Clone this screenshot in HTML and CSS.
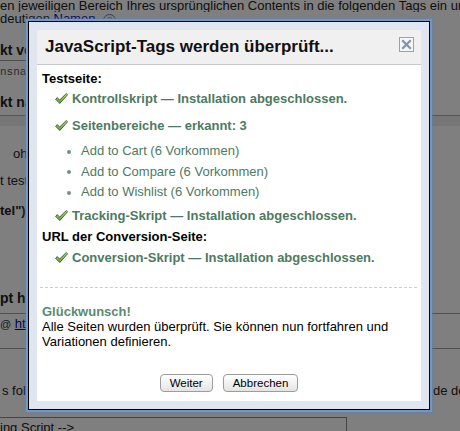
FILE: index.html
```html
<!DOCTYPE html>
<html lang="de">
<head>
<meta charset="utf-8">
<title>JavaScript-Tags</title>
<link rel="stylesheet" href="styles.css">
</head>
<body>
<div class="page">
  <div class="pg-line l1">en jeweiligen Bereich Ihres ursprünglichen Contents in die folgenden Tags ein und vergeben Sie einen</div>
  <div class="pg-line l2">deutigen <span class="pg-link">Namen</span> <span class="pg-help">?</span></div>
  <div class="pg-head h1">kt vor dem Klick</div>
  <div class="pg-field">nsnandrew@example.com</div>
  <div class="pg-head h2">kt nach dem Klick</div>
  <div class="pg-band"></div>
  <div class="pg-line r3">ohne Parameter</div>
  <div class="pg-line r4">t testen</div>
  <div class="pg-line r5">tel")</div>
  <div class="pg-head h3">pt hinzufügen</div>
  <div class="pg-rule r6"></div>
  <div class="pg-line r7"><span class="pg-at">@</span> <span class="pg-link">http://www.example.com/</span></div>
  <div class="pg-rule r8"></div>
  <div class="pg-line r9"><span class="pg-left">s folgenden Code ein</span><span class="pg-right">de der Seite</span></div>
  <div class="pg-code">ing Script --&gt;</div>
</div>

<div class="overlay"></div>

<div class="dialog">
  <div class="dlg-inner">
    <div class="dlg-header">
      <div class="dlg-title">JavaScript-Tags werden überprüft...</div>
      <div class="dlg-close">
        <svg width="15" height="15" viewBox="0 0 15 15">
          <rect x="0.5" y="0.5" width="14" height="14" fill="#f6f6f6" stroke="#8fa3ba"/>
          <path d="M4 4 L11 11 M11 4 L4 11" stroke="#7d94ae" stroke-width="2.2" stroke-linecap="square"/>
        </svg>
      </div>
    </div>
    <div class="dlg-body">
      <div class="sec">Testseite:</div>
      <div class="check">
        <svg class="tick" width="13" height="11" viewBox="0 0 13 11"><defs><linearGradient id="g1" x1="0" y1="0" x2="0" y2="1"><stop offset="0" stop-color="#c4e88a"/><stop offset="1" stop-color="#62a035"/></linearGradient></defs><path d="M0.6 6.2 L2.3 4.6 L4.6 7.1 L11.3 0.5 L12.6 1.7 L4.8 10.5 Z" fill="url(#g1)" stroke="#2f5222" stroke-width="0.9" stroke-linejoin="round"/></svg>
        <span>Kontrollskript — Installation abgeschlossen.</span>
      </div>
      <div class="check c2">
        <svg class="tick" width="13" height="11" viewBox="0 0 13 11"><path d="M0.6 6.2 L2.3 4.6 L4.6 7.1 L11.3 0.5 L12.6 1.7 L4.8 10.5 Z" fill="url(#g1)" stroke="#2f5222" stroke-width="0.9" stroke-linejoin="round"/></svg>
        <span>Seitenbereiche — erkannt: 3</span>
      </div>
      <ul class="sub">
        <li>Add to Cart (6 Vorkommen)</li>
        <li>Add to Compare (6 Vorkommen)</li>
        <li>Add to Wishlist (6 Vorkommen)</li>
      </ul>
      <div class="check c3">
        <svg class="tick" width="13" height="11" viewBox="0 0 13 11"><path d="M0.6 6.2 L2.3 4.6 L4.6 7.1 L11.3 0.5 L12.6 1.7 L4.8 10.5 Z" fill="url(#g1)" stroke="#2f5222" stroke-width="0.9" stroke-linejoin="round"/></svg>
        <span>Tracking-Skript — Installation abgeschlossen.</span>
      </div>
      <div class="sec s2">URL der Conversion-Seite:</div>
      <div class="check c4">
        <svg class="tick" width="13" height="11" viewBox="0 0 13 11"><path d="M0.6 6.2 L2.3 4.6 L4.6 7.1 L11.3 0.5 L12.6 1.7 L4.8 10.5 Z" fill="url(#g1)" stroke="#2f5222" stroke-width="0.9" stroke-linejoin="round"/></svg>
        <span>Conversion-Skript — Installation abgeschlossen.</span>
      </div>
      <div class="divider"></div>
      <div class="congrats">Glückwunsch!</div>
      <div class="msg">Alle Seiten wurden überprüft. Sie können nun fortfahren und Variationen definieren.</div>
    </div>
    <div class="dlg-footer">
      <button class="btn">Weiter</button>
      <button class="btn">Abbrechen</button>
    </div>
  </div>
</div>
</body>
</html>
```

FILE: styles.css
```css
html, body {
  margin: 0;
  padding: 0;
  background: #ffffff;
  font-family: "Liberation Sans", Arial, sans-serif;
  font-size: 13px;
  color: #222;
  overflow: hidden;
  height: 431px;
}

.page {
  width: 460px;
  overflow: hidden;
}

.pg-line {
  white-space: nowrap;
  line-height: 20px;
  height: 20px;
  overflow: hidden;
}

.l1 { line-height: 12px; height: 12px; }
.l2 { line-height: 13px; height: 13px; }

.pg-link {
  color: #0000cc;
  text-decoration: underline;
}

.pg-help {
  display: inline-block;
  width: 11px;
  height: 11px;
  border: 1px solid #6b7fa8;
  border-radius: 50%;
  font-size: 9px;
  line-height: 11px;
  text-align: center;
  color: #6b7fa8;
  margin-left: 4px;
}

.pg-head {
  font-weight: bold;
  font-size: 14px;
  line-height: 20px;
  height: 20px;
  white-space: nowrap;
}

.h1 { margin-top: 15px; }
.h2 { margin-top: 12px; }
.h3 { margin-top: 67px; }

.pg-field {
  height: 19px;
  border-top: 1px solid #9a9a9a;
  font-family: "Liberation Mono", monospace;
  font-size: 11px;
  line-height: 22px;
  color: #5a5a5a;
  width: 200px;
  white-space: nowrap;
  overflow: hidden;
}

.pg-band {
  margin-top: 3px;
  height: 10px;
  border-top: 1px solid #aaaaaa;
  background: #ececec;
}

.r3 { margin-top: 18px; padding-left: 13px; }
.r4 { margin-top: 7px; }
.r5 { margin-top: 10px; font-weight: bold; }

.pg-rule {
  height: 0;
  border-top: 1px solid #a0a0a0;
}
.r6 { margin-top: 5px; }
.r8 { margin-top: 14px; }

.pg-at {
  font-size: 11px;
  color: #334;
}

.r9 {
  margin-top: 32px;
  display: flex;
}
.pg-left {
  width: 431px;
  flex: none;
  padding-left: 2px;
}
.pg-right {
  flex: none;
}

.pg-code {
  margin-top: 16px;
  width: 346px;
  height: 30px;
  border: 1px solid #8a8a8a;
  border-left: none;
  line-height: 20px;
  white-space: nowrap;
}

.overlay {
  position: fixed;
  top: 0;
  left: 0;
  right: 0;
  bottom: 0;
  background: rgba(0, 0, 0, 0.5);
}

.dialog {
  position: absolute;
  left: 28px;
  top: 21px;
  width: 384px;
  height: 371px;
  padding: 8px;
  background: #dfe6f0;
  border: 1px solid #000;
  box-shadow: 0 0 0 2px #6f98c6, 0 0 3px 3px rgba(90, 135, 190, 0.55);
}

.dlg-inner {
  height: 100%;
  background: #ffffff;
  display: flex;
  flex-direction: column;
}

.dlg-header {
  height: 34px;
  background: #f0f0f0;
  border-bottom: 1px solid #c9c9c9;
  display: flex;
  justify-content: space-between;
  align-items: flex-start;
  flex: none;
}

.dlg-title {
  font-size: 17px;
  font-weight: bold;
  line-height: 34px;
  padding-left: 8px;
  color: #111;
  white-space: nowrap;
}

.dlg-close {
  width: 15px;
  height: 15px;
  margin: 7px 7px 0 0;
}
.dlg-close svg { display: block; }

.dlg-body {
  padding: 4px 4px 0 5px;
  font-size: 13px;
  color: #000;
}

.sec {
  font-weight: bold;
  line-height: 20px;
  color: #000;
}
.s2 { margin-top: 1px; }

.check {
  display: flex;
  align-items: center;
  gap: 4px;
  padding-left: 13px;
  line-height: 20px;
  font-weight: bold;
  color: #4d7a62;
  white-space: nowrap;
}
.check .tick { flex: none; margin-top: -2px; }
.c2 { margin-top: 7px; }
.c3 { margin-top: 3.5px; }
.c4 { margin-top: 1px; }

.sub {
  list-style: none;
  margin: 5px 0 0;
  padding: 0;
}
.sub li {
  position: relative;
  padding-left: 39px;
  line-height: 20.5px;
  color: #4d7a62;
}
.sub li::before {
  content: "";
  position: absolute;
  left: 25px;
  top: 8.5px;
  width: 4px;
  height: 4px;
  border-radius: 50%;
  background: #6f957f;
}

.divider {
  margin: 19px 0 0 -2px;
  border-top: 1px dashed #cccccc;
}

.congrats {
  margin-top: 16px;
  font-weight: bold;
  color: #5b8a70;
  line-height: 15px;
}

.msg {
  line-height: 15px;
  width: 350px;
  color: #000;
}

.dlg-footer {
  margin-top: auto;
  padding-bottom: 9px;
  display: flex;
  justify-content: center;
  gap: 10px;
}

.btn {
  height: 18px;
  box-sizing: border-box;
  padding: 0 9px;
  font-family: "Liberation Sans", Arial, sans-serif;
  font-size: 11.5px;
  line-height: 16px;
  color: #000;
  border: 1px solid #9c9c9c;
  border-radius: 4px;
  background: linear-gradient(#ffffff, #f2f2f2 50%, #e4e4e4);
}
```
